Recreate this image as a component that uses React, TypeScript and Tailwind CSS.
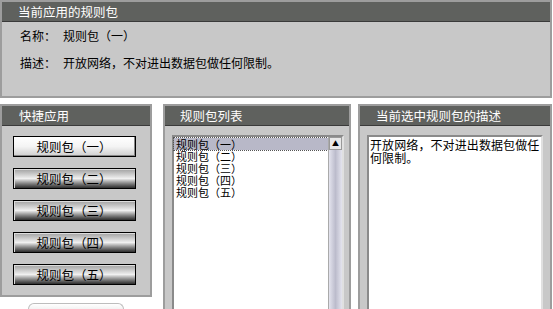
import React from 'react';

const rules = ['规则包（一）', '规则包（二）', '规则包（三）', '规则包（四）', '规则包（五）'];

function Header({ title, pad = 'pl-4' }: { title: string; pad?: string }) {
  return (
    <div className={`h-[20px] bg-[#5f615e] border-b border-[#3a3a3a] text-white text-[12.5px] leading-[19px] whitespace-nowrap ${pad}`}>{title}</div>
  );
}

function Panel({ className, children }: { className?: string; children: React.ReactNode }) {
  return <div className={`border-2 border-[#9d9d9d] bg-[#c8c8c8] ${className ?? ''}`}>{children}</div>;
}

export default function App() {
  const [active, setActive] = React.useState(0);
  const [selected, setSelected] = React.useState(0);

  return (
    <div className="w-[553px] h-[309px] bg-white overflow-hidden text-[12px] text-black" style={{ fontFamily: '"Noto Sans CJK SC", "DejaVu Sans", sans-serif' }}>
      <Panel className="w-[552px] h-[98px]">
        <Header title="当前应用的规则包" />
        <div className="pl-[18px] pt-[5px] flex flex-col gap-[9px] leading-[18px] whitespace-nowrap">
          <div className="flex">
            <span>名称：</span>
            <span className="ml-[7px]">{rules[active]}</span>
          </div>
          <div className="flex">
            <span>描述：</span>
            <span className="ml-[7px]">开放网络，不对进出数据包做任何限制。</span>
          </div>
        </div>
      </Panel>

      <div className="flex mt-[6px] items-start">
        <div className="flex flex-col items-center">
          <Panel className="w-[152px] h-[193px]">
            <Header title="快捷应用" pad="pl-[17px]" />
            <div className="flex flex-col items-center gap-[11px] pt-[10px] pr-[4px]">
              {rules.map((r, i) => (
                <button
                  key={r}
                  onClick={() => setActive(i)}
                  className={`w-[123px] h-[21px] border border-black text-[12.5px] leading-[19px] ${
                    i === 0
                      ? 'bg-gradient-to-b from-[#ffffff] via-[#f4f4f4] to-[#cfcfcf] shadow-[inset_-1px_-1px_0_#888]'
                      : 'bg-gradient-to-b from-[#a0a0a0] via-[#f0f0f0] to-[#2e2e2e] shadow-[inset_1px_1px_0_#ddd]'
                  }`}
                >
                  {r}
                </button>
              ))}
            </div>
          </Panel>
          <div className="mt-[6px] w-[96px] h-[8px] rounded-t-[6px] border-t border-x border-[#bdbdbd] bg-gradient-to-b from-[#ffffff] to-[#eeeeee]" />
        </div>

        <Panel className="ml-[11px] w-[188px] h-[210px]">
          <Header title="规则包列表" pad="pl-[15px]" />
          <div className="mt-[9px] ml-[7px] w-[172px] h-[180px] border-2 border-[#8a8a8a] border-r-[#e0e0e0] border-b-[#e0e0e0] bg-white flex">
            <div className="flex-1 text-[11px] leading-[12px] pt-[1px]">
              {rules.map((r, i) => (
                <div
                  key={r}
                  onClick={() => setSelected(i)}
                  className={`pl-[2px] h-[12px] whitespace-nowrap ${i === selected ? 'bg-[#b8b8c8] outline outline-1 outline-dotted outline-[#555]' : ''}`}
                >
                  {r}
                </div>
              ))}
            </div>
            <div className="w-[14px] bg-gradient-to-r from-[#e4e4ee] via-[#bcbccc] to-[#e4e4ee] border-l border-[#aaa] flex flex-col">
              <div className="h-[13px] bg-[#e8e8e8] border border-[#999] flex items-center justify-center text-[7px] leading-none">▲</div>
            </div>
          </div>
        </Panel>

        <Panel className="ml-[7px] w-[194px] h-[210px]">
          <Header title="当前选中规则包的描述" pad="pl-[16px]" />
          <div className="mt-[9px] ml-[7px] w-[176px] h-[180px] border-2 border-[#8a8a8a] border-r-[#e0e0e0] border-b-[#e0e0e0] bg-white text-[12px] leading-[13px] tracking-[0.1px] p-[1px]">
            开放网络，不对进出数据包做任何限制。
          </div>
        </Panel>
      </div>
    </div>
  );
}
